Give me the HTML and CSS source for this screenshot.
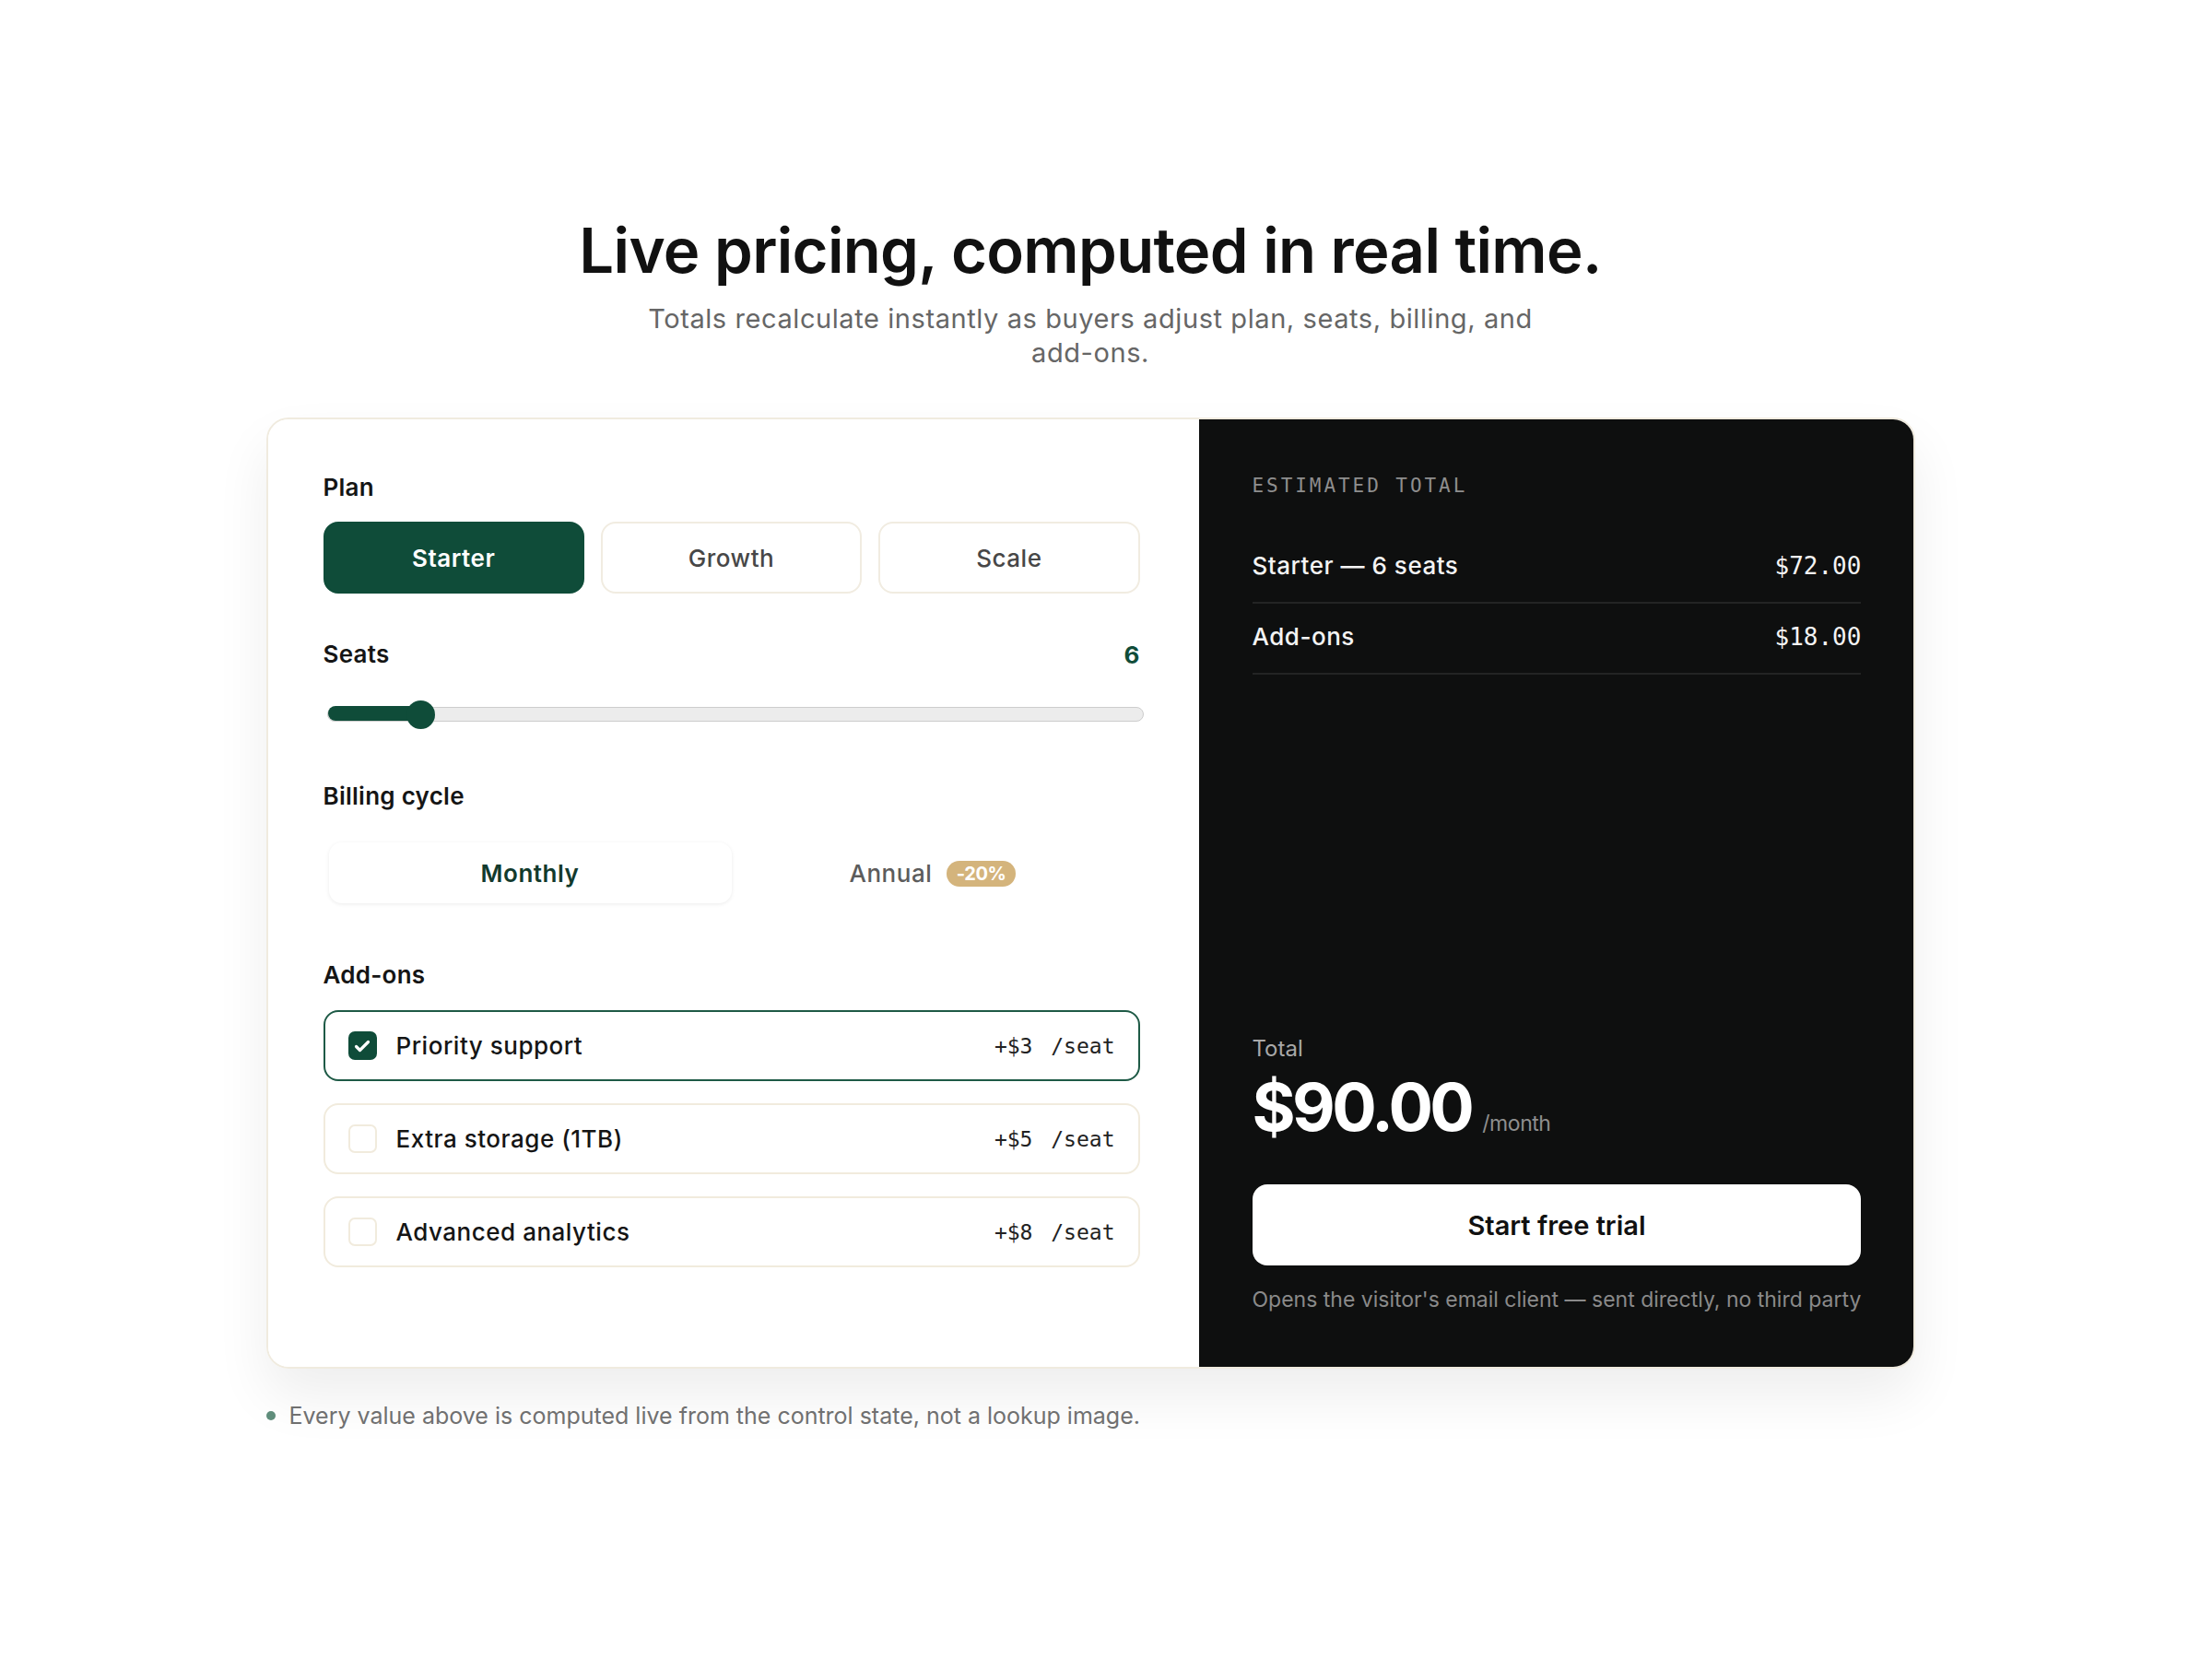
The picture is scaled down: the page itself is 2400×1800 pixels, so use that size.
FILE: index.html
```html
<!DOCTYPE html>
<html lang="en">
<head>
    <meta charset="UTF-8">
    <meta name="viewport" content="width=device-width, initial-scale=1.0">
    <title>Live Pricing</title>
    <link rel="stylesheet" href="styles.css">
</head>
<body>

    <main class="page">
        <header class="intro">
            <h1>Live pricing, computed in real time.</h1>
            <p>Totals recalculate instantly as buyers adjust plan, seats, billing, and <span class="nowrap">add-ons.</span></p>
        </header>

        <section class="calc">
            <div class="controls">
                <div class="field">
                    <div class="field-label">Plan</div>
                    <div class="plans">
                        <button class="plan active">Starter</button>
                        <button class="plan">Growth</button>
                        <button class="plan">Scale</button>
                    </div>
                </div>

                <div class="field field-seats">
                    <div class="field-head">
                        <span class="field-label">Seats</span>
                        <span class="seat-count">6</span>
                    </div>
                    <div class="slider">
                        <div class="slider-fill" style="width: 11.6%;"></div>
                        <div class="slider-thumb" style="left: 11.6%;"></div>
                    </div>
                </div>

                <div class="field field-cycle">
                    <div class="field-label">Billing cycle</div>
                    <div class="cycle">
                        <button class="cycle-option active">Monthly</button>
                        <button class="cycle-option">Annual <span class="badge">-20%</span></button>
                    </div>
                </div>

                <div class="field">
                    <div class="field-label">Add-ons</div>
                    <div class="addons">
                        <label class="addon checked">
                            <span class="box">
                                <svg viewBox="0 0 24 24" width="24" height="24"><path d="M5.5 12.5l4 4L18.5 7.5" fill="none" stroke="#fff" stroke-width="3.2" stroke-linecap="round" stroke-linejoin="round"/></svg>
                            </span>
                            <span class="addon-name">Priority support</span>
                            <span class="addon-price">+$3 /seat</span>
                        </label>
                        <label class="addon">
                            <span class="box"></span>
                            <span class="addon-name">Extra storage (1TB)</span>
                            <span class="addon-price">+$5 /seat</span>
                        </label>
                        <label class="addon">
                            <span class="box"></span>
                            <span class="addon-name">Advanced analytics</span>
                            <span class="addon-price">+$8 /seat</span>
                        </label>
                    </div>
                </div>
            </div>

            <aside class="summary">
                <div class="summary-top">
                    <div class="eyebrow">ESTIMATED TOTAL</div>
                    <div class="line">
                        <span>Starter — 6 seats</span>
                        <span class="amount">$72.00</span>
                    </div>
                    <div class="line">
                        <span>Add-ons</span>
                        <span class="amount">$18.00</span>
                    </div>
                </div>

                <div class="summary-bottom">
                    <div class="total-label">Total</div>
                    <div class="total">
                        <span class="total-value">$90.00</span>
                        <span class="total-unit">/month</span>
                    </div>
                    <button class="cta">Start free trial</button>
                    <p class="cta-note">Opens the visitor's email client — sent directly, no third party</p>
                </div>
            </aside>
        </section>

        <p class="footnote"><span class="dot"></span>Every value above is computed live from the control state, not a lookup image.</p>
    </main>

</body>
</html>
```
FILE: styles.css
```css
body {
    margin: 0;
    padding: 0 34px 0 0;
    background: #fff;
    font-family: Inter, "Noto Sans", sans-serif;
    color: #141414;
}
button {
    font-family: inherit;
    cursor: pointer;
}
.nowrap {
    white-space: nowrap;
}
.page {
    width: 1789px;
    margin: 0 auto;
    padding: 233px 0 200px;
}
.intro {
    text-align: center;
}
.intro h1 {
    margin: 0;
    font-size: 67px;
    font-weight: 600;
    line-height: 78px;
    letter-spacing: -0.01em;
    color: #111;
}
.intro p {
    max-width: 1000px;
    margin: 16px auto 0;
    font-size: 29px;
    line-height: 37px;
    letter-spacing: 0.02em;
    color: #666;
}

/* calculator card */
.calc {
    display: grid;
    grid-template-columns: 1010px 1fr;
    margin-top: 52px;
    border: 2px solid #f0ebdf;
    border-radius: 24px;
    overflow: hidden;
    box-shadow: 0 30px 60px rgba(0, 0, 0, 0.07);
}
.controls {
    padding: 58px 64px 108px 60px;
    background: #fff;
}
.field {
    margin-bottom: 50px;
}
.field:last-child {
    margin-bottom: 0;
}
.field-seats {
    margin-bottom: 65px;
}
.field-cycle {
    margin-bottom: 56px;
}
.field-label {
    font-size: 26px;
    font-weight: 600;
    line-height: 32px;
    letter-spacing: 0.01em;
    color: #151515;
}
.field-head {
    display: flex;
    justify-content: space-between;
    align-items: center;
}
.seat-count {
    font-size: 26px;
    font-weight: 700;
    color: #0f4c39;
}
.plans {
    display: grid;
    grid-template-columns: repeat(3, 1fr);
    gap: 18px;
    margin-top: 21px;
}
.plan {
    height: 78px;
    border: 2px solid #f1ece1;
    border-radius: 16px;
    background: #fff;
    font-size: 26px;
    font-weight: 500;
    letter-spacing: 0.02em;
    color: #474747;
}
.plan.active {
    background: #0f4c39;
    border-color: #0f4c39;
    color: #fff;
    font-weight: 600;
}

/* seat slider */
.slider {
    position: relative;
    height: 14px;
    margin: 41px -4px 8px 4px;
    background: #ececec;
    border: 1px solid #cdcdcd;
    border-radius: 999px;
}
.slider-fill {
    height: 16px;
    margin-top: -2px;
    background: #0f4c39;
    border-radius: 999px;
}
.slider-thumb {
    position: absolute;
    top: 50%;
    width: 31px;
    height: 31px;
    margin: -15px 0 0 -17px;
    background: #0f4c39;
    border-radius: 50%;
}

/* billing toggle */
.cycle {
    display: grid;
    grid-template-columns: 1fr 1fr;
    padding: 6px;
    margin-top: 28px;
    border-radius: 18px;
}
.cycle-option {
    height: 66px;
    border: none;
    border-radius: 14px;
    background: transparent;
    font-size: 26px;
    font-weight: 500;
    letter-spacing: 0.02em;
    color: #5c5c5c;
}
.cycle-option.active {
    background: #fff;
    color: #123a2d;
    font-weight: 600;
    box-shadow: 0 1px 4px rgba(0, 0, 0, 0.08);
}
.badge {
    display: inline-block;
    margin-left: 8px;
    padding: 2px 11px;
    border-radius: 999px;
    background: #d4b47c;
    color: #fff;
    font-size: 20px;
    font-weight: 700;
    letter-spacing: -0.02em;
    vertical-align: 2px;
}

/* add-ons */
.addons {
    display: flex;
    flex-direction: column;
    gap: 24px;
    margin-top: 22px;
}
.addon {
    display: flex;
    align-items: center;
    height: 77px;
    padding: 0 25px;
    border: 2px solid #f1ebdd;
    border-radius: 16px;
    box-sizing: border-box;
    cursor: pointer;
}
.addon.checked {
    border-color: #1e5a46;
}
.box {
    display: flex;
    align-items: center;
    justify-content: center;
    width: 31px;
    height: 31px;
    border: 2px solid #f1ebdd;
    border-radius: 7px;
    box-sizing: border-box;
}
.addon.checked .box {
    background: #0f4c39;
    border-color: #0f4c39;
}
.addon-name {
    flex: 1;
    margin-left: 21px;
    font-size: 26px;
    font-weight: 500;
    letter-spacing: 0.02em;
    color: #151515;
}
.addon-price {
    font-family: "DejaVu Sans Mono", "Liberation Mono", monospace;
    font-size: 23px;
    word-spacing: 6px;
    color: #222;
}

/* dark summary column */
.summary {
    display: flex;
    flex-direction: column;
    justify-content: space-between;
    padding: 60px 58px 58px;
    background: #0e0f0f;
    color: #f4f4f4;
}
.eyebrow {
    font-family: "DejaVu Sans Mono", "Liberation Mono", monospace;
    font-size: 21px;
    line-height: 24px;
    letter-spacing: 0.14em;
    color: #8e8e8e;
}
.summary-top .eyebrow {
    margin-bottom: 39px;
}
.line {
    display: flex;
    justify-content: space-between;
    align-items: center;
    height: 75px;
    border-bottom: 2px solid #232424;
    font-size: 26px;
    font-weight: 500;
    letter-spacing: 0.02em;
}
.line span:first-child {
    margin-top: -4px;
}
.amount {
    font-family: "DejaVu Sans Mono", "Liberation Mono", monospace;
    font-size: 26px;
    font-weight: 400;
    letter-spacing: 0;
    margin-top: -4px;
}
.total-label {
    font-size: 24px;
    line-height: 30px;
    color: #a8a8a8;
}
.total {
    display: flex;
    align-items: baseline;
    gap: 12px;
    margin-top: 8px;
}
.total-value {
    font-size: 72px;
    font-weight: 700;
    line-height: 80px;
    letter-spacing: -0.05em;
    color: #fff;
}
.total-unit {
    font-size: 23px;
    letter-spacing: -0.02em;
    color: #8e8e8e;
}
.cta {
    display: block;
    width: 100%;
    height: 88px;
    margin-top: 44px;
    border: none;
    border-radius: 16px;
    background: #fff;
    color: #111;
    font-size: 29px;
    font-weight: 600;
}
.cta-note {
    margin: 22px 0 0;
    font-size: 23px;
    line-height: 30px;
    color: #8a8a8a;
    white-space: nowrap;
}

.footnote {
    display: flex;
    align-items: center;
    margin: 36px 0 0;
    font-size: 25px;
    color: #707070;
}
.dot {
    width: 10px;
    height: 10px;
    margin: 0 15px 0 0;
    border-radius: 50%;
    background: #5f8d7b;
}
```
